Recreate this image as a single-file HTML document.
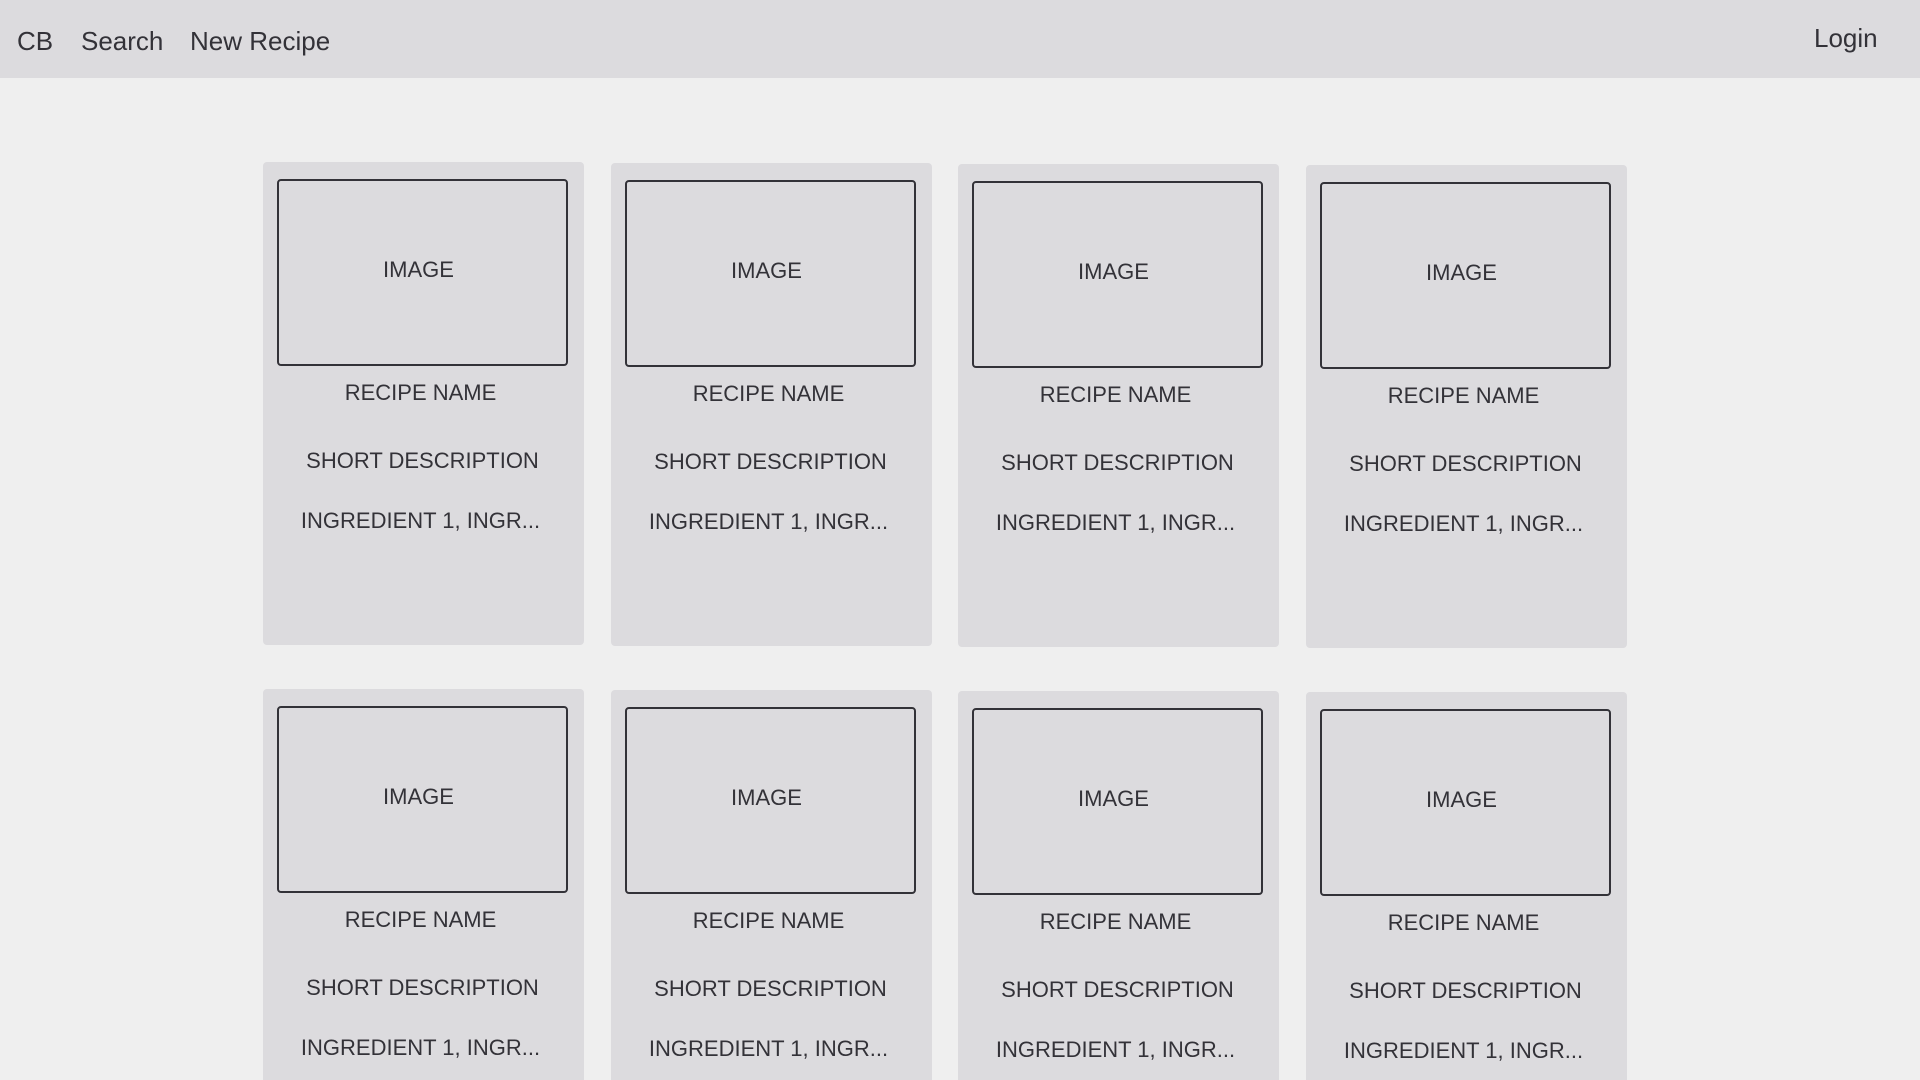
<!DOCTYPE html>
<html style="margin:0;width:1920px;height:1080px;overflow:hidden"><head><style>
body{margin:0;width:1920px;height:1080px;background:#efefef;overflow:hidden;font-family:"Liberation Sans",sans-serif;color:#333238;position:relative}
.nav{position:absolute;left:0;top:0;width:1920px;height:78px;background:#dcdbde}
.nav span{position:absolute;top:26px;font-size:26px}
.card{position:absolute;width:321px;height:483px;background:#dcdbde;border-radius:4px}
.img{position:absolute;left:14px;top:17px;width:287px;height:183px;border:2px solid #333238;border-radius:4px;box-sizing:content-box}
.t{position:absolute;left:0;width:100%;text-align:center;font-size:22px;line-height:26px}
</style></head><body>
<div class="nav"><span style="left:17px">CB</span><span style="left:81px">Search</span><span style="left:190px">New Recipe</span><span style="left:1814px;top:23px">Login</span></div>
<div id="c"></div>
<script>
var xs=[263,611,958,1306],ys=[162,689],h='';
ys.forEach(function(y){xs.forEach(function(x,i){var yy=y+i;
h+='<div class="card" style="left:'+x+'px;top:'+yy+'px"><div class="img"></div><div class="t" style="top:95px;left:-5px">IMAGE</div><div class="t" style="top:218px;left:-3px">RECIPE NAME</div><div class="t" style="top:286px;left:-1px">SHORT DESCRIPTION</div><div class="t" style="top:346px;left:-3px">INGREDIENT 1, INGR...</div></div>';});});
document.getElementById('c').innerHTML=h;
</script>
</body></html>
